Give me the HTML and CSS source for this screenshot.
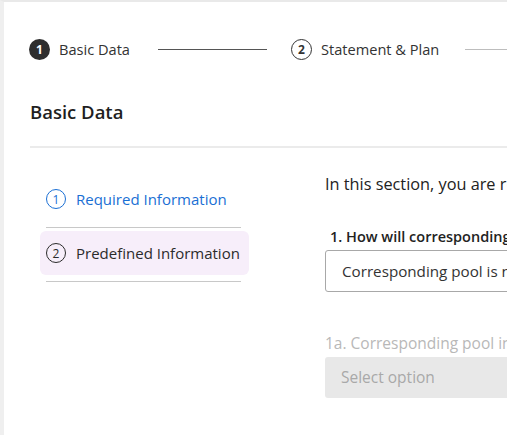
FILE: index.html
```html
<!DOCTYPE html>
<html>
<head>
<meta charset="utf-8">
<link rel="stylesheet" href="styles.css">
</head>
<body>
<div class="page">
  <div class="stepper">
    <div class="step active">
      <span class="step-num">1</span>
      <span class="step-label">Basic Data</span>
    </div>
    <span class="step-line dark"></span>
    <div class="step">
      <span class="step-num outline">2</span>
      <span class="step-label">Statement &amp; Plan</span>
    </div>
    <span class="step-line light"></span>
  </div>

  <h1 class="title">Basic Data</h1>
  <div class="divider"></div>

  <div class="body">
    <nav class="side">
      <div class="nav-item current">
        <span class="nav-num">1</span>
        <span class="nav-label">Required Information</span>
      </div>
      <div class="nav-rule"></div>
      <div class="nav-item selected">
        <span class="nav-num">2</span>
        <span class="nav-label">Predefined Information</span>
      </div>
      <div class="nav-rule"></div>
    </nav>

    <main class="main">
      <p class="intro">In this section, you are required to provide the basic data of the pool.</p>
      <div class="field">
        <label class="field-label">1. How will corresponding pool be used?</label>
        <div class="input">Corresponding pool is not used for any purpose</div>
      </div>
      <div class="field disabled">
        <label class="field-label">1a. Corresponding pool information</label>
        <div class="input">Select option</div>
      </div>
    </main>
  </div>
</div>
</body>
</html>
```

FILE: styles.css
```css
html, body {
  margin: 0;
  padding: 0;
  background: #ffffff;
}

body {
  font-family: "Open Sans", "Noto Sans", sans-serif;
  color: #2b2b2b;
  overflow: hidden;
  width: 507px;
  height: 435px;
}

.page {
  box-sizing: border-box;
  height: 435px;
  border-left: 4px solid #efefef;
  border-top: 2px solid #e9e9e9;
  white-space: nowrap;
  overflow: hidden;
}

.stepper {
  display: flex;
  align-items: center;
  padding: 36px 0 0 25px;
  height: 22px;
}

.step {
  display: flex;
  align-items: center;
  gap: 9px;
  flex: none;
}

.step-num {
  box-sizing: border-box;
  width: 21px;
  height: 21px;
  border-radius: 50%;
  background: #2e2e2e;
  color: #fff;
  font-size: 12px;
  font-weight: 700;
  display: flex;
  align-items: center;
  justify-content: center;
}

.step-num.outline {
  background: #fff;
  color: #333;
  border: 1.5px solid #333;
}

.step-label {
  font-size: 14.6px;
  color: #333;
}

.step-line {
  flex: none;
  height: 1px;
}

.step-line.dark {
  width: 109px;
  margin: 0 24px 0 28px;
  background: #555;
}

.step-line.light {
  width: 60px;
  margin-left: 26px;
  background: #bdbdbd;
}

.title {
  margin: 39px 0 0 26px;
  font-size: 18.5px;
  font-weight: 600;
  line-height: 26px;
  color: #1f1f1f;
}

.divider {
  margin: 21px 0 0 26px;
  height: 2px;
  background: #ebebeb;
}

.body {
  display: flex;
  padding-top: 24px;
}

.side {
  flex: none;
  width: 209px;
  margin-left: 36px;
  padding-top: 5px;
}

.nav-item {
  display: flex;
  align-items: center;
  gap: 10px;
  height: 44px;
  padding-left: 6px;
  border-radius: 6px;
  font-size: 15px;
}

.nav-num {
  box-sizing: border-box;
  width: 20px;
  height: 20px;
  border-radius: 50%;
  border: 1.5px solid currentColor;
  display: flex;
  align-items: center;
  justify-content: center;
  font-size: 12px;
}

.nav-item.current {
  color: #1a6fd4;
}

.nav-item.selected {
  color: #2b2b2b;
  background: #f7eefa;
}

.nav-rule {
  height: 1px;
  background: #c8c8c8;
  margin: 6px 8px 3px 6px;
}

.main {
  flex: none;
  margin-left: 76px;
  padding-top: 1px;
}

.intro {
  margin: 0;
  font-size: 16.3px;
  line-height: 22px;
  color: #222;
}

.field {
  margin-top: 32px;
}

.field-label {
  display: block;
  padding-left: 5px;
  font-size: 14.5px;
  font-weight: 600;
  line-height: 20px;
  color: #222;
}

.input {
  box-sizing: border-box;
  margin-top: 3px;
  width: 320px;
  height: 42px;
  border: 1px solid #a8a8a8;
  border-radius: 3px;
  padding-left: 16px;
  font-size: 15.2px;
  line-height: 40px;
  color: #333;
}

.field.disabled {
  margin-top: 41px;
}

.field.disabled .field-label {
  padding-left: 0;
  font-weight: 400;
  font-size: 15.5px;
  color: #b8b8b8;
}

.field.disabled .input {
  margin-top: 4px;
  border: none;
  background: #e8e8e8;
  height: 41px;
  line-height: 41px;
  font-size: 15.5px;
  color: #a9a9a9;
}
```
